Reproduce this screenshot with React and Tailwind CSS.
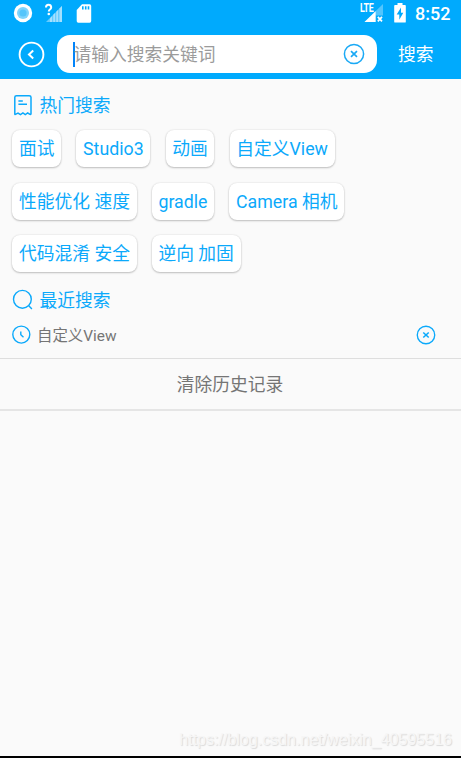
const HOT_ROWS = [
  ['面试', 'Studio3', '动画', '自定义View'],
  ['性能优化 速度', 'gradle', 'Camera 相机'],
  ['代码混淆 安全', '逆向 加固'],
]

const HISTORY = ['自定义View']

function RecordIcon() {
  return (
    <svg className="w-[20px] h-[20px]" viewBox="0 0 20 20">
      <circle cx="10" cy="10" r="9.2" fill="#fff" />
      <circle cx="10" cy="10" r="6" fill="#7fd4fd" />
      <circle cx="10" cy="10" r="3.6" fill="#55c5fb" />
    </svg>
  )
}

function SignalUnknownIcon() {
  return (
    <svg className="w-[18px] h-[20px]" viewBox="0 0 18 20">
      <path d="M1 19L17 3V19Z" fill="#66cbfe" />
      <g fill="#a5e0fe">
        <path d="M5 15.2L7 13.2V19H5Z" />
        <path d="M8.3 11.8L10 10V19H8.3Z" />
        <path d="M11.3 8.7L13 7V19H11.3Z" />
        <path d="M14.5 5.4L17 3V19H14.5Z" />
      </g>
      <path d="M1 4.4Q1 1.7 3.5 1.7T6.2 4.2Q6.2 5.5 4.9 6.5Q3.8 7.3 3.8 8.6" fill="none" stroke="#fff" strokeWidth="2" />
      <circle cx="3.8" cy="11" r="1.3" fill="#fff" />
    </svg>
  )
}

function SdCardIcon() {
  return (
    <svg className="w-[16px] h-[19px]" viewBox="0 0 16 19">
      <path d="M6 .3H13.6Q15.2.3 15.2 2V17Q15.2 18.7 13.6 18.7H2.3Q.7 18.7.7 17V6Z" fill="#fff" />
      <path d="M6 2.3H7.6V5.6H6ZM8.9 2.3H10.5V5.6H8.9ZM11.7 2.3H13.3V5.6H11.7Z" fill="#00aafd" />
    </svg>
  )
}

function LteIcon() {
  return (
    <div className="relative w-[24px] h-[20px]">
      <svg className="w-[24px] h-[20px]" viewBox="0 0 24 20">
        <path d="M4.5 19L23 1V12.5H15.6V19Z" fill="#53c5fd" />
        <path d="M4.5 19L15.6 8.2V19Z" fill="#fff" />
        <path d="M17.8 13.9L22 18.4M22 13.9L17.8 18.4" stroke="#fff" strokeWidth="1.7" />
      </svg>
      <span className="absolute left-0 top-0 origin-left scale-x-[0.74] text-[12px] leading-[10px] font-bold tracking-[-0.4px]">LTE</span>
    </div>
  )
}

function BatteryIcon() {
  return (
    <svg className="w-[12px] h-[20px]" viewBox="0 0 12 20">
      <path d="M3.5 0H8.5V2H11Q11.8 2 11.8 3V18.7Q11.8 19.6 11 19.6H1Q.2 19.6.2 18.7V3Q.2 2 1 2H3.5Z" fill="#fff" />
      <path d="M7 4.6L2.7 11.6H5.3V16.8L9.3 9.7H7Z" fill="#00aafd" />
    </svg>
  )
}

function BackIcon() {
  return (
    <svg className="w-[27px] h-[27px] text-white" viewBox="0 0 27 27" fill="none" stroke="currentColor">
      <circle cx="13.5" cy="13.5" r="11.9" strokeWidth="1.9" />
      <path d="M15.2 9.6L11 13.5L15.2 17.4" strokeWidth="2" />
    </svg>
  )
}

function ClearIcon({ className }) {
  return (
    <svg className={className} viewBox="0 0 22 22" fill="none" stroke="currentColor">
      <circle cx="11" cy="11" r="9.6" strokeWidth="1.5" />
      <path d="M8 8.2L14 13.8M14 8.2L8 13.8" strokeWidth="1.7" />
    </svg>
  )
}

function ReceiptIcon() {
  return (
    <svg className="w-[20px] h-[22px]" viewBox="0 0 20 22" fill="none" stroke="currentColor" strokeWidth="1.5">
      <path d="M3 20.6Q2.8 20.6 2.8 19.8V3.3Q2.8 1.7 4.5 1.7H17.2Q19 1.7 19 3.3V19.8Q19 20.6 18 20.3L15.7 19L13.3 20.6L10.9 19L8.5 20.6L6 19Z" />
      <path d="M6.4 6.9H10.8M6.4 10.3H15" />
    </svg>
  )
}

function SearchIcon() {
  return (
    <svg className="w-[22px] h-[22px]" viewBox="0 0 22 22" fill="none" stroke="currentColor" strokeWidth="1.4">
      <circle cx="10.4" cy="10.3" r="8.9" />
      <path d="M16.8 16.8L19.9 20" />
    </svg>
  )
}

function ClockIcon() {
  return (
    <svg className="w-[20px] h-[20px]" viewBox="0 0 20 20" fill="none" stroke="currentColor" strokeWidth="1.4">
      <circle cx="10.3" cy="9.6" r="8.5" />
      <path d="M9.8 6.6V9.8L12.5 12.3" />
    </svg>
  )
}

export default function App() {
  return (
    <div className="relative flex flex-col h-[758px] w-[461px] overflow-hidden bg-[#fafafa] text-[17.75px] border-b-2 border-black font-[Roboto,'Noto_Sans_CJK_SC',sans-serif]">

      {/* Status bar + search bar */}
      <header className="h-[79px] shrink-0 bg-[#00aafd] text-white">
        <div className="h-[26px] flex items-center pl-[13px] pr-[10px]">
          <RecordIcon />
          <div className="ml-[12px]"><SignalUnknownIcon /></div>
          <div className="ml-[13px]"><SdCardIcon /></div>
          <div className="ml-auto"><LteIcon /></div>
          <div className="ml-[10px]"><BatteryIcon /></div>
          <span className="ml-[9px] w-[36px] pt-[1px] text-[18px] leading-[26px] font-medium whitespace-nowrap">8:52</span>
        </div>
        <div className="flex items-center h-[38px] mt-[9px] pl-[18px]">
          <BackIcon />
          <div className="ml-[12px] w-[320px] h-[38px] rounded-[13px] bg-white flex items-center pl-[16px] pr-[12px]">
            <span className="w-[2px] h-[25px] bg-[#0284fa]" />
            <span className="-ml-[1.5px] pt-[2px] leading-[26px] text-[#9b9b9b]">请输入搜索关键词</span>
            <ClearIcon className="ml-auto w-[22px] h-[22px] text-[#1aa9f5]" />
          </div>
          <button className="ml-[21px] pt-[2px] leading-[26px]">搜索</button>
        </div>
      </header>

      {/* Hot searches */}
      <section className="pl-[12px] text-[#0ba9fb]">
        <h2 className="flex items-center h-[26px] mt-[13px]">
          <ReceiptIcon />
          <span className="ml-[7.5px] pt-[2px] leading-[26px]">热门搜索</span>
        </h2>
        <div className="mt-[12px] pl-[0.3px] flex flex-col gap-[15.5px]">
          {HOT_ROWS.map(row => (
            <div key={row[0]} className="flex gap-[15.2px]">
              {row.map(word => (
                <button key={word} className="h-[37px] pt-[1px] px-[6.7px] rounded-[8px] bg-white leading-[37px] whitespace-nowrap shadow-[0_1px_2px_rgba(0,0,0,0.22),0_0_2px_rgba(0,0,0,0.12)]">
                  {word}
                </button>
              ))}
            </div>
          ))}
        </div>
      </section>

      {/* Recent searches */}
      <section className="mt-[15px]">
        <h2 className="flex items-center h-[26px] pl-[12px] text-[#0ba9fb]">
          <SearchIcon />
          <span className="ml-[5.5px] pt-[1px] leading-[26px]">最近搜索</span>
        </h2>
        {HISTORY.map(word => (
          <div key={word} className="flex items-center h-[46px] pb-[2px] pl-[11px] pr-[25px] text-[#0ba9fb] border-b border-[#dedede]">
            <ClockIcon />
            <span className="ml-[6px] pt-[2px] text-[15.4px] leading-[24px] text-[#757575]">{word}</span>
            <ClearIcon className="ml-auto w-[20px] h-[20px]" />
          </div>
        ))}
        <button className="block w-full h-[52px] pr-[1px] leading-[53px] text-center text-[#757575] border-b-2 border-[#e5e5e5]">
          清除历史记录
        </button>
      </section>

      <span className="absolute right-[9px] bottom-[7px] text-[16.05px] leading-[20px] text-[#f6f6f6] [text-shadow:1px_1px_1px_#dadada] font-['Liberation_Sans',sans-serif]">
        https://blog.csdn.net/weixin_40595516
      </span>
    </div>
  )
}
